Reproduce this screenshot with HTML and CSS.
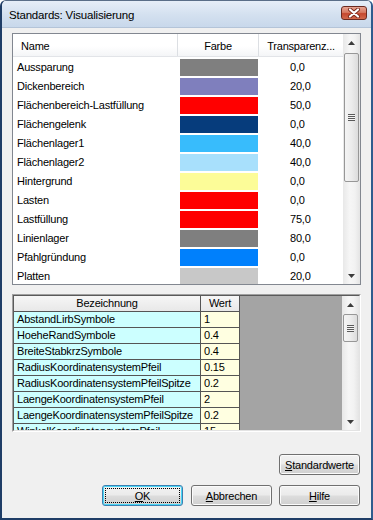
FILE: index.html
```html
<!DOCTYPE html>
<html lang="de">
<head>
<meta charset="utf-8">
<title>Standards: Visualisierung</title>
<link rel="stylesheet" href="styles.css">
</head>
<body>
<div class="window">
  <div class="titlebar">
    <span class="title">Standards: Visualisierung</span>
    <div class="close">
      <svg width="14" height="10" viewBox="0 0 14 10">
        <path d="M3 1.5 L11 8.5 M11 1.5 L3 8.5" stroke="#7a2a1c" stroke-width="4" stroke-linecap="round"/>
        <path d="M3 1.5 L11 8.5 M11 1.5 L3 8.5" stroke="#ffffff" stroke-width="2.2" stroke-linecap="round"/>
      </svg>
    </div>
  </div>
  <div class="client">
    <div class="list">
      <div class="list-body">
        <div class="list-head">
          <div class="th th-name">Name</div>
          <div class="th th-color">Farbe</div>
          <div class="th th-tr">Transparenz...</div>
        </div>
        <div class="row"><div class="c-name">Aussparung</div><div class="c-color"><span class="sw" style="background:#7f7f7f"></span></div><div class="c-tr">0,0</div></div>
        <div class="row"><div class="c-name">Dickenbereich</div><div class="c-color"><span class="sw" style="background:#7f7fbd"></span></div><div class="c-tr">20,0</div></div>
        <div class="row"><div class="c-name">Flächenbereich-Lastfüllung</div><div class="c-color"><span class="sw" style="background:#ff0000"></span></div><div class="c-tr">50,0</div></div>
        <div class="row"><div class="c-name">Flächengelenk</div><div class="c-color"><span class="sw" style="background:#063c7c"></span></div><div class="c-tr">0,0</div></div>
        <div class="row"><div class="c-name">Flächenlager1</div><div class="c-color"><span class="sw" style="background:#38bcfc"></span></div><div class="c-tr">40,0</div></div>
        <div class="row"><div class="c-name">Flächenlager2</div><div class="c-color"><span class="sw" style="background:#a8e0fc"></span></div><div class="c-tr">40,0</div></div>
        <div class="row"><div class="c-name">Hintergrund</div><div class="c-color"><span class="sw" style="background:#fcfc98"></span></div><div class="c-tr">0,0</div></div>
        <div class="row"><div class="c-name">Lasten</div><div class="c-color"><span class="sw" style="background:#ff0000"></span></div><div class="c-tr">0,0</div></div>
        <div class="row"><div class="c-name">Lastfüllung</div><div class="c-color"><span class="sw" style="background:#ff0000"></span></div><div class="c-tr">75,0</div></div>
        <div class="row"><div class="c-name">Linienlager</div><div class="c-color"><span class="sw" style="background:#7f7f7f"></span></div><div class="c-tr">80,0</div></div>
        <div class="row"><div class="c-name">Pfahlgründung</div><div class="c-color"><span class="sw" style="background:#0080fc"></span></div><div class="c-tr">0,0</div></div>
        <div class="row"><div class="c-name">Platten</div><div class="c-color"><span class="sw" style="background:#c8c8c8"></span></div><div class="c-tr">20,0</div></div>
      </div>
      <div class="vscroll">
        <div class="arrow"><svg width="7" height="4" viewBox="0 0 7 4"><polygon points="3.5,0 7,4 0,4" fill="#3c3c3c"/></svg></div>
        <div class="track">
          <div class="thumb thumb-top"><span class="grip"></span></div>
        </div>
        <div class="arrow"><svg width="7" height="4" viewBox="0 0 7 4"><polygon points="0,0 7,0 3.5,4" fill="#3c3c3c"/></svg></div>
      </div>
    </div>

    <div class="grid">
      <div class="grid-inner">
        <div class="gtable">
          <div class="gh">Bezeichnung</div><div class="gh">Wert</div>
          <div class="gc k">AbstandLirbSymbole</div><div class="gc v">1</div>
          <div class="gc k">HoeheRandSymbole</div><div class="gc v">0.4</div>
          <div class="gc k">BreiteStabkrzSymbole</div><div class="gc v">0.4</div>
          <div class="gc k">RadiusKoordinatensystemPfeil</div><div class="gc v">0.15</div>
          <div class="gc k">RadiusKoordinatensystemPfeilSpitze</div><div class="gc v">0.2</div>
          <div class="gc k">LaengeKoordinatensystemPfeil</div><div class="gc v">2</div>
          <div class="gc k">LaengeKoordinatensystemPfeilSpitze</div><div class="gc v">0.2</div>
          <div class="gc k">WinkelKoordinatensystemPfeil</div><div class="gc v">15</div>
        </div>
        <div class="gempty"></div>
        <div class="vscroll">
          <div class="arrow"><svg width="7" height="4" viewBox="0 0 7 4"><polygon points="3.5,0 7,4 0,4" fill="#3c3c3c"/></svg></div>
          <div class="track">
            <div class="thumb thumb-grid"><span class="grip"></span></div>
          </div>
          <div class="arrow"><svg width="7" height="4" viewBox="0 0 7 4"><polygon points="0,0 7,0 3.5,4" fill="#3c3c3c"/></svg></div>
        </div>
      </div>
    </div>

    <div class="btn-row first">
      <button class="btn"><u>S</u>tandardwerte</button>
    </div>
    <div class="btn-row second">
      <button class="btn default"><span class="focus"><u>O</u>K</span></button>
      <button class="btn"><u>A</u>bbrechen</button>
      <button class="btn"><u>H</u>ilfe</button>
    </div>
  </div>
</div>
</body>
</html>
```

FILE: styles.css
```css
* { box-sizing: border-box; }
html, body {
  margin: 0;
  padding: 0;
  background: #ffffff;
}
body {
  font-family: "Liberation Sans", Arial, sans-serif;
  font-size: 11px;
  letter-spacing: -0.2px;
  color: #000;
}
.window {
  width: 373px;
  height: 520px;
  border-style: solid;
  border-width: 1px 2px 2px 2px;
  border-color: #5a6e88 #2f5c8e #1f3d66 #1f3d66;
  border-radius: 6px 6px 0 0;
  background: #f0f0f0;
  display: flex;
  flex-direction: column;
  overflow: hidden;
}
.titlebar {
  height: 27px;
  flex: none;
  display: flex;
  justify-content: space-between;
  align-items: flex-start;
  padding: 0 4px 0 7px;
  background: linear-gradient(#e6eef8, #d3e0ef 55%, #c8d8eb);
  border-bottom: 1px solid #b4c4d8;
}
.title {
  font-size: 11.5px;
  line-height: 14px;
  margin-top: 7px;
  color: #000;
}
.close {
  width: 26px;
  height: 14px;
  margin-top: 5px;
  border: 1px solid #6b2a20;
  border-radius: 3px;
  background: linear-gradient(#e7a492, #d77a62 45%, #c5482f 55%, #d2694c);
  display: flex;
  align-items: center;
  justify-content: center;
}
.client {
  flex: 1;
  padding: 5px 0 0 10px;
  display: flex;
  flex-direction: column;
}

/* top list view */
.list {
  width: 349px;
  height: 252px;
  border: 1px solid #828790;
  background: #ffffff;
  display: flex;
}
.list-body {
  flex: 1;
  overflow: hidden;
}
.list-head {
  display: flex;
  height: 23px;
  background: linear-gradient(#ffffff, #ffffff 55%, #f4f5f7);
  border-bottom: 1px solid #e2e4e8;
}
.th {
  border-right: 1px solid #dcdfe3;
  line-height: 24px;
  white-space: nowrap;
}
.th-name { width: 165px; padding-left: 8px; }
.th-color { width: 81px; text-align: center; }
.th-tr { width: 84px; text-align: center; border-right: none; }
.row {
  display: flex;
  height: 19px;
}
.c-name {
  width: 165px;
  padding-left: 4px;
  line-height: 20px;
  white-space: nowrap;
}
.c-color {
  width: 81px;
  padding: 2px 0 0 2px;
}
.sw {
  display: block;
  width: 78px;
  height: 17px;
}
.c-tr {
  width: 84px;
  padding-left: 31px;
  line-height: 20px;
}

/* scrollbars */
.vscroll {
  width: 17px;
  flex: none;
  display: flex;
  flex-direction: column;
  background: linear-gradient(90deg, #e8e8e8, #f6f6f6 40%, #f2f2f2 70%, #e4e4e4);
}
.arrow {
  height: 17px;
  flex: none;
  display: flex;
  align-items: center;
  justify-content: center;
}
.track {
  flex: 1;
  padding: 2px 1px 0 1px;
}
.thumb {
  border: 1px solid #979797;
  border-radius: 2px;
  background: linear-gradient(90deg, #f4f4f4, #ececec 50%, #dcdcdc);
  display: flex;
  align-items: center;
  justify-content: center;
}
.thumb-top { height: 129px; }
.thumb-grid { height: 28px; margin-top: -1px; }
.grip {
  width: 7px;
  height: 7px;
  background: repeating-linear-gradient(#5a5a5a 0 1px, #f4f4f4 1px 2px);
}

/* property grid */
.grid {
  margin-top: 9px;
  width: 349px;
  height: 138px;
  border: 1px solid;
  border-color: #a0a0a0 #ffffff #ffffff #a0a0a0;
}
.grid-inner {
  height: 100%;
  border: 1px solid;
  border-color: #5a5a5a #e3e3e3 #e3e3e3 #5a5a5a;
  display: flex;
  overflow: hidden;
}
.gtable {
  width: 226px;
  flex: none;
  display: grid;
  grid-template-columns: 187px 39px;
  grid-auto-rows: 16px;
  overflow: hidden;
}
.gh, .gc {
  border-right: 1px solid #555555;
  border-bottom: 1px solid #555555;
  line-height: 15px;
  white-space: nowrap;
  overflow: hidden;
}
.gh {
  text-align: center;
  background: linear-gradient(#f6f6f6, #e8e8e8);
}
.gc { padding-left: 3px; }
.k { background: #ccffff; }
.v { background: #ffffe1; }
.gempty {
  flex: 1;
  background: #a4a4a4;
}

/* buttons */
.btn-row {
  display: flex;
  justify-content: flex-end;
  padding-right: 11px;
}
.btn-row.first { margin-top: 22px; }
.btn-row.second { margin-top: 10px; gap: 7px; }
.btn-row.second .default { margin-right: 1px; }
.btn {
  width: 81px;
  height: 21px;
  padding: 0;
  font-family: "Liberation Sans", Arial, sans-serif;
  font-size: 11px;
  letter-spacing: -0.2px;
  color: #000;
  border: 1px solid #707070;
  border-radius: 3px;
  background: linear-gradient(#f2f2f2, #ebebeb 48%, #dddddd 52%, #cfcfcf);
  box-shadow: inset 0 0 0 1px #fbfbfb;
}
.btn u { text-decoration-thickness: 1px; text-underline-offset: 1px; }
.btn.default {
  border-color: #3c7fb1;
  box-shadow: inset 0 0 0 1px #48d6f6;
  display: flex;
  padding: 2px;
}
.focus {
  flex: 1;
  border: 1px dotted #000;
  display: flex;
  align-items: center;
  justify-content: center;
}
```
